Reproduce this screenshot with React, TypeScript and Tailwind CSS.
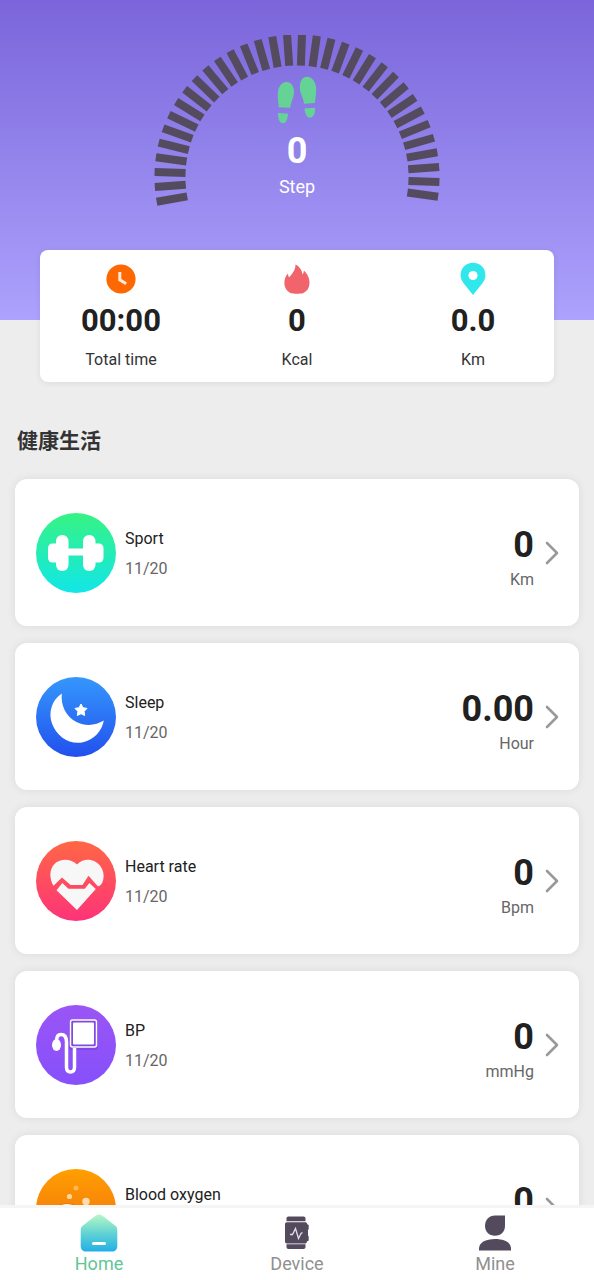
import type { ReactNode } from 'react';

const TICK_COUNT = 34;

function StepGauge() {
  return (
    <svg width="286" height="172" viewBox="0 0 286 172" aria-hidden="true">
      {Array.from({ length: TICK_COUNT }, (_, index) => (
        <rect
          key={index}
          x="0.5"
          y="138"
          width="31"
          height="8"
          fill="#544b5f"
          transform={`rotate(${index * 6 - 10} 143 142)`}
        />
      ))}
    </svg>
  );
}

function FootprintsIcon() {
  return (
    <svg width="40" height="48" viewBox="0 0 40 48" fill="#66d396" aria-hidden="true">
      <path d="M9.500 6C14 6 17 10 17 16c0 6-3 9-3.800 15.800L1.800 31.200C1.500 27 .7 24 .8 18 .9 11 4.500 6 9.500 6Z" />
      <path d="M1 37l10 .8c-.3 5-1.600 9.400-5 9.400C2.500 47.200.8 43 1 37Z" />
      <path d="M30 .8c5 0 9 5 9.200 12 .1 5.500-1 9-1.200 14.200L27 27.800C26.500 21 22.800 18 22.800 11.500 22.800 5 25.500.8 30 .8Z" />
      <path d="M27.500 32.500l10.500-.7c.2 6-1.600 9.800-4.800 9.800-3.400 0-5.200-3.600-5.700-9.100Z" />
    </svg>
  );
}

function ClockIcon() {
  return (
    <svg width="30" height="30" viewBox="0 0 30 30" aria-hidden="true">
      <circle cx="15" cy="15" r="14.600" fill="#fd6803" />
      <path d="M13.800 8v7.800l6.400 4" fill="none" stroke="#ffe9d9" strokeWidth="3" />
    </svg>
  );
}

function FlameIcon() {
  return (
    <svg width="26" height="30" viewBox="0 0 26 30" aria-hidden="true">
      <path
        d="M11.500.5c4 2 6.700 6 7 10 .9-1 1.300-2.600 1.300-4C23.500 10 25.800 14.500 25.500 19.500c-.3 4.500-2.500 8-6.500 9.700-1.500.6-10.500.6-12 0C3 27.500.6 24 .4 19.800.2 15.500 1.500 12 4 9.500c0 1.600.3 2.700 1.200 3.800C8.500 9.500 11.500 6 11.500.5Z"
        fill="#f1646b"
      />
    </svg>
  );
}

function PinIcon() {
  return (
    <svg width="26" height="34" viewBox="0 0 26 34" aria-hidden="true">
      <path
        d="M13 .8C6 .8.600 6 .600 13c0 3 1 5.500 2.800 8L13 33l9.600-12c1.800-2.500 2.800-5 2.800-8C25.400 6 20 .8 13 .8Z"
        fill="#30e7ec"
      />
      <circle cx="13" cy="13.500" r="4.600" fill="#fff" />
    </svg>
  );
}

interface BadgeProps {
  id: string;
  from: string;
  to: string;
  children: ReactNode;
}

function Badge({ id, from, to, children }: BadgeProps) {
  return (
    <svg width="80" height="80" viewBox="0 0 80 80" className="shrink-0" aria-hidden="true">
      <defs>
        <linearGradient id={id} x1="0" y1="0" x2="0" y2="1">
          <stop offset="0" stopColor={from} />
          <stop offset="1" stopColor={to} />
        </linearGradient>
      </defs>
      <circle cx="40" cy="40" r="40" fill={`url(#${id})`} />
      {children}
    </svg>
  );
}

function SportBadge() {
  return (
    <Badge id="sport" from="#36f383" to="#12e6e8">
      <g fill="#fff">
        <rect x="12" y="30.500" width="14" height="19" rx="4.500" />
        <rect x="53.500" y="30.500" width="14" height="19" rx="4.500" />
        <rect x="20" y="22" width="12.500" height="36" rx="6" />
        <rect x="47" y="22" width="12.500" height="36" rx="6" />
        <rect x="30" y="35.500" width="19" height="7" />
      </g>
    </Badge>
  );
}

function SleepBadge() {
  return (
    <Badge id="sleep" from="#3597fc" to="#2250ee">
      <path
        d="M25.800 16.500C16 23 12 35 16 46.500c4.500 13 17.500 21.500 31 18.800C58 63 66 54 67.800 43.600 60 48.500 49.500 49.500 40.500 45 30 39.500 24.500 28.500 25.800 16.500Z"
        fill="#fff"
      />
      <path
        d="M45 27l1.900 3.700 4.100.7-2.900 3 .6 4.100-3.700-1.800-3.700 1.800.6-4.100-2.900-3 4.100-.7Z"
        fill="#fff"
        stroke="#fff"
        strokeLinejoin="round"
      />
    </Badge>
  );
}

function HeartBadge() {
  return (
    <Badge id="heart" from="#ff6745" to="#fd3379">
      <path
        d="M41 23.500c4.500-5 12-6 18-3 7.500 4 10.500 13 7.500 20.500-1 2.500-2.500 4.300-4.700 4.300L52.500 34.800 46.500 44H34.500L26 36.500l-8.500 8.300C13.500 38 13 29 18 23.500c6-6.500 17-6 23 0Z"
        fill="#f7f7f7"
      />
      <path
        d="M20.500 49.200L26.300 42l6.200 5.800h16.300l4.500-5.800 6.500 6L41 69Z"
        fill="#f7f7f7"
      />
    </Badge>
  );
}

function PressureBadge() {
  return (
    <Badge id="pressure" from="#9a55f5" to="#8650fb">
      <rect x="33" y="15" width="29" height="30" rx="3" fill="#7443d4" opacity="0.600" />
      <g fill="none" stroke="#fff">
        <rect x="34.500" y="15" width="26" height="27" rx="2" strokeWidth="1.500" />
        <path
          d="M20.500 36c0-5 2-6.500 4.500-6.500 4 0 5.500 3 5.500 7.500v25c0 3.500 1.500 5 4 5s4-1.500 4-5V43"
          strokeWidth="3.500"
        />
      </g>
      <rect x="37" y="17.500" width="21" height="22" rx="1" fill="#fff" />
      <ellipse cx="20.500" cy="40" rx="4.500" ry="6" fill="#fff" />
    </Badge>
  );
}

function OxygenBadge() {
  return (
    <Badge id="oxygen" from="#ff9f00" to="#f06a12">
      <ellipse cx="31" cy="55" rx="19" ry="21" fill="#e97a0d" />
      <ellipse cx="31" cy="56" rx="17" ry="21" fill="#fff3e2" />
      <circle cx="33.500" cy="27.500" r="2.600" fill="#ffd9a0" />
      <circle cx="40" cy="19" r="2.500" fill="#ffb84e" />
      <circle cx="50" cy="32.500" r="3.700" fill="#ffdcae" />
    </Badge>
  );
}

function ChevronIcon() {
  return (
    <svg width="14" height="24" viewBox="0 0 14 24" className="shrink-0" aria-hidden="true">
      <path
        d="M2 2l10 10L2 22"
        fill="none"
        stroke="#999"
        strokeWidth="2.600"
        strokeLinecap="round"
        strokeLinejoin="round"
      />
    </svg>
  );
}

function HomeIcon() {
  return (
    <svg width="38" height="38" viewBox="0 0 38 38" aria-hidden="true">
      <defs>
        <linearGradient id="home" x1="0" y1="0" x2="0" y2="1">
          <stop offset="0" stopColor="#b5f8c4" />
          <stop offset="0.500" stopColor="#62d3d3" />
          <stop offset="1" stopColor="#22afe6" />
        </linearGradient>
      </defs>
      <path
        d="M15.500 1.700c2-1.500 5-1.500 7 0L35 11.500c1.600 1.300 2.300 2.800 2.300 4.500v16c0 3.500-2 5.500-5.500 5.500H6.200C2.700 37.500.7 35.500.7 32V16c0-1.700.7-3.200 2.300-4.500Z"
        fill="url(#home)"
      />
      <rect x="12" y="28" width="14" height="3" rx="1.500" fill="#fff" />
    </svg>
  );
}

function WatchIcon() {
  return (
    <svg width="26" height="34" viewBox="0 0 26 34" aria-hidden="true">
      <g fill="#544a5e">
        <path d="M2.500 5.200V2.500C2.500 1.200 3.300.5 4.500.5h15c1.200 0 2 .7 2 2v2.700Z" />
        <path d="M2.500 28.300h19V31c0 1.200-.8 2-2 2h-15c-1.200 0-2-.8-2-2Z" />
        <path d="M3 6.200h18c1.200 0 2 .6 2.300 2l1.400.8v4l-.7 1v5.500l.7 1v4l-1.700 1c-.3 1.500-1 2-2 2H3c-1.300 0-2-.8-2-2V8.200c0-1.200.7-2 2-2Z" />
      </g>
      <path
        d="M6 18.500h2.500l3-6 3 10 2.500-5 1.500-1"
        fill="none"
        stroke="#e3dfe8"
        strokeWidth="1.300"
      />
    </svg>
  );
}

function MineIcon() {
  return (
    <svg width="32" height="36" viewBox="0 0 32 36" fill="#544a5e" aria-hidden="true">
      <path d="M16 .5h10v10.300c0 6-4 10-10 10s-10-4-10-10S10 .5 16 .5Z" />
      <path d="M0 35.500v-1.700C0 27.500 6.500 24 16 24s16 3.500 16 9.800v1.700Z" />
    </svg>
  );
}

const stats = [
  { label: 'Total time', value: '00:00', icon: <ClockIcon /> },
  { label: 'Kcal', value: '0', icon: <FlameIcon /> },
  { label: 'Km', value: '0.0', icon: <PinIcon /> },
];

const records = [
  { name: 'Sport', value: '0', unit: 'Km', badge: <SportBadge /> },
  { name: 'Sleep', value: '0.00', unit: 'Hour', badge: <SleepBadge /> },
  { name: 'Heart rate', value: '0', unit: 'Bpm', badge: <HeartBadge /> },
  { name: 'BP', value: '0', unit: 'mmHg', badge: <PressureBadge /> },
  { name: 'Blood oxygen', value: '0', unit: '%', badge: <OxygenBadge /> },
];

const tabs = [
  { label: 'Home', icon: <HomeIcon />, active: true },
  { label: 'Device', icon: <WatchIcon />, active: false },
  { label: 'Mine', icon: <MineIcon />, active: false },
];

export default function App() {
  return (
    <div className="flex h-screen flex-col bg-[#ededed] font-[Roboto,'Noto_Sans_CJK_SC',sans-serif] text-[#212121]">
      <main className="min-h-0 flex-1 overflow-y-auto pb-4 [scrollbar-width:none]">
        <header className="grid justify-items-center bg-linear-to-b from-[#7b65da] to-[#ada2fd] pt-[35px] pb-[113px]">
          <div className="[grid-area:1/1]">
            <StepGauge />
          </div>
          <div className="flex flex-col items-center pt-[41px] text-white [grid-area:1/1]">
            <FootprintsIcon />
            <p className="mt-1 text-4xl leading-[46px] font-bold">0</p>
            <p className="text-lg leading-[26px]">Step</p>
          </div>
        </header>

        <section className="relative mx-10 -mt-[70px] flex justify-between rounded-lg bg-white px-[41px] pt-3 pb-2 shadow-[0_1px_6px_rgba(0,0,0,0.08)]">
          {stats.map((stat) => (
            <div key={stat.label} className="flex w-20 flex-col items-center">
              <div className="flex h-[34px] items-center">{stat.icon}</div>
              <p className="mt-1 text-[31px] leading-[42px] font-bold">{stat.value}</p>
              <p className="mt-1 text-base leading-7 text-[#333]">{stat.label}</p>
            </div>
          ))}
        </section>

        <h2 className="mt-11 px-[17px] text-[21px] leading-[30px] font-bold text-[#333]">
          健康生活
        </h2>

        <ul className="mt-[23px] flex flex-col gap-[17px] px-[15px]">
          {records.map((record) => (
            <li key={record.name}>
              <button
                type="button"
                className="flex h-[147px] w-full items-center rounded-xl bg-white pr-5 pl-[21px] text-left shadow-[0_0_10px_rgba(0,0,0,0.08)]"
              >
                {record.badge}
                <span className="ml-[9px] flex flex-1 flex-col pt-0.5 text-base leading-[30px]">
                  <span>{record.name}</span>
                  <span className="text-[#666]">11/20</span>
                </span>
                <span className="mr-[11px] flex flex-col items-end pt-3">
                  <span className="text-4xl leading-[42px] font-bold">{record.value}</span>
                  <span className="text-base leading-7 text-[#666]">{record.unit}</span>
                </span>
                <ChevronIcon />
              </button>
            </li>
          ))}
        </ul>
      </main>

      <nav className="grid grid-cols-3 border-t-[3px] border-[#f5f5f5] bg-white pt-1.5 pb-1">
        {tabs.map((tab) => (
          <a
            key={tab.label}
            href={`#${tab.label.toLowerCase()}`}
            aria-current={tab.active ? 'page' : undefined}
            className={`flex flex-col items-center text-lg leading-6 ${
              tab.active ? 'text-[#5fc696]' : 'text-[#909090]'
            }`}
          >
            <span className="flex h-[38px] items-center">{tab.icon}</span>
            {tab.label}
          </a>
        ))}
      </nav>
    </div>
  );
}
